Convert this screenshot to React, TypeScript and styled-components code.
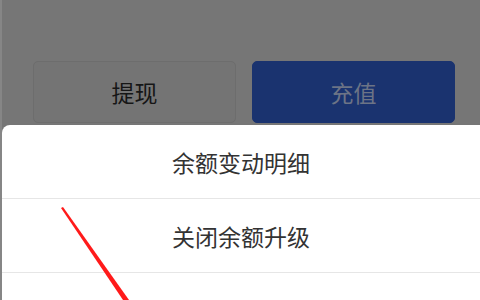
import React from "react";
import styled, { createGlobalStyle } from "styled-components";

const Global = createGlobalStyle`
  html, body { margin: 0; padding: 0; }
  body { font-family: "Noto Sans CJK SC", "Noto Sans", sans-serif; }
`;

const Screen = styled.div`
  position: relative;
  width: 480px;
  height: 300px;
  overflow: hidden;
  background: #767676;
  border-left: 2px solid #868686;
  box-sizing: border-box;
  display: flex;
  flex-direction: column;
`;

const ButtonRow = styled.div`
  display: flex;
  gap: 16px;
  padding: 61px 25px 0 31px;
`;

const ActionButton = styled.div<{ $primary?: boolean }>`
  flex: 0 0 auto;
  width: ${(p) => (p.$primary ? "203px" : "203px")};
  height: 62px;
  box-sizing: border-box;
  border-radius: 5px;
  display: flex;
  align-items: center;
  justify-content: center;
  font-size: 23px;
  background: ${(p) => (p.$primary ? "#1a336f" : "#747474")};
  border: 1px solid ${(p) => (p.$primary ? "#1a336f" : "#6d6d6d")};
  color: ${(p) => (p.$primary ? "#6c7486" : "#161616")};
`;

const Sheet = styled.div`
  margin-top: 2px;
  flex: 1;
  background: #ffffff;
  border-top-left-radius: 8px;
  display: flex;
  flex-direction: column;
`;

const SheetItem = styled.div<{ $last?: boolean }>`
  flex: 0 0 auto;
  height: 73px;
  display: flex;
  align-items: center;
  justify-content: center;
  font-size: 23px;
  color: #333333;
  border-bottom: ${(p) => (p.$last ? "none" : "1px solid #e6e6e6")};
`;

const Annotation = styled.svg`
  position: absolute;
  left: 0;
  top: 0;
  pointer-events: none;
`;

export default function App() {
  const items = ["余额变动明细", "关闭余额升级", "提现到银行卡"];
  return (
    <>
      <Global />
      <Screen>
        <ButtonRow>
          <ActionButton>提现</ActionButton>
          <ActionButton $primary>充值</ActionButton>
        </ButtonRow>
        <Sheet>
          {items.map((t, i) => (
            <SheetItem key={t} $last={i === items.length - 1}>
              {t}
            </SheetItem>
          ))}
        </Sheet>
        <Annotation width="480" height="300" viewBox="0 0 480 300">
          <polygon points="59,208 61,207 127,300 121,300" fill="#ff1a1a" />
        </Annotation>
      </Screen>
    </>
  );
}
